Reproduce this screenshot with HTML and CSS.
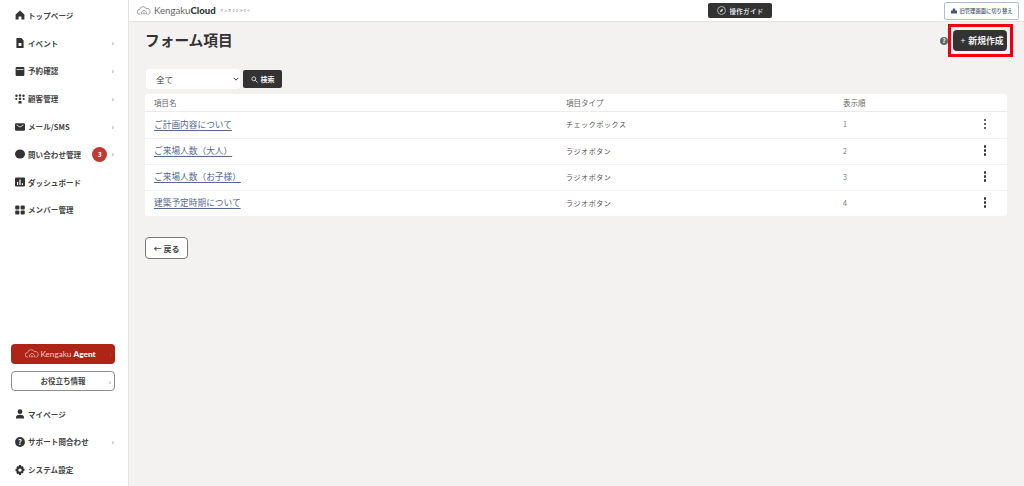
FILE: index.html
```html
<!DOCTYPE html>
<html lang="ja">
<head>
<meta charset="utf-8">
<title>フォーム項目</title>
<link rel="stylesheet" href="styles.css">
</head>
<body>
<div class="app">
  <aside class="sidebar">
    <nav class="nav">
      <a class="nav-item"><svg class="ico" viewBox="0 0 10 10"><path d="M5 .6 .6 4.6v5h3V6.400h2.800v3.200h3v-5z"/></svg><span>トップページ</span></a>
      <a class="nav-item"><svg class="ico" viewBox="0 0 10 10"><path fill-rule="evenodd" d="M1.400 0h5l2.200 2.400V10H1.400zM3.600 5v3h2.800V5z"/></svg><span>イベント</span><i class="chev">›</i></a>
      <a class="nav-item"><svg class="ico" viewBox="0 0 10 10"><path fill-rule="evenodd" d="M.6 2.200A1.200 1.200 0 0 1 1.800 1h6.400a1.200 1.200 0 0 1 1.200 1.200v6.600A1.200 1.200 0 0 1 8.200 10H1.800A1.200 1.200 0 0 1 .6 8.800zM1.500 3.300v.6h7v-.6z"/></svg><span>予約確認</span><i class="chev">›</i></a>
      <a class="nav-item"><svg class="ico" viewBox="0 0 10 10"><circle cx="1.500" cy="1.800" r="1.200"/><circle cx="5" cy="1.500" r="1.200"/><circle cx="8.500" cy="1.800" r="1.200"/><circle cx="1.300" cy="5" r="1.100"/><circle cx="8.700" cy="5" r="1.100"/><circle cx="5" cy="4.800" r="1.300"/><path d="M3.300 9.600 3.600 7h2.800l.3 2.600z"/></svg><span>顧客管理</span><i class="chev">›</i></a>
      <a class="nav-item"><svg class="ico" viewBox="0 0 10 10"><path fill-rule="evenodd" d="M1.200 1.200h7.600A1.200 1.200 0 0 1 10 2.400v5.200a1.200 1.200 0 0 1-1.200 1.200H1.200A1.200 1.200 0 0 1 0 7.600V2.400a1.200 1.200 0 0 1 1.200-1.200zM1.600 3.200 5 5.600l3.400-2.400v-.6L5 4.700 1.600 2.600z"/></svg><span>メール/SMS</span><i class="chev">›</i></a>
      <a class="nav-item"><svg class="ico" viewBox="0 0 10 10"><ellipse cx="5" cy="5" rx="5" ry="4.600"/></svg><span>問い合わせ管理</span><b class="badge">3</b><i class="chev chev-tight">›</i></a>
      <a class="nav-item"><svg class="ico" viewBox="0 0 10 10"><path fill-rule="evenodd" d="M1 .4h8a1 1 0 0 1 1 1v7.200a1 1 0 0 1-1 1H1a1 1 0 0 1-1-1V1.400a1 1 0 0 1 1-1zM2 5v3h1.200V5zm2.400-2.400V8h1.200V2.600zM6.800 6.200V8H8V6.200z"/></svg><span>ダッシュボード</span></a>
      <a class="nav-item"><svg class="ico" viewBox="0 0 10 10"><rect x=".2" y=".6" width="4.200" height="3.800" rx="1"/><rect x="5.600" y=".6" width="4.200" height="3.800" rx="1"/><rect x=".2" y="5.600" width="4.200" height="3.800" rx="1"/><rect x="5.600" y="5.600" width="4.200" height="3.800" rx="1"/></svg><span>メンバー管理</span></a>
    </nav>
    <div class="promo">
      <a class="promo-btn promo-red">
        <svg class="cloud cloud-promo" viewBox="0 0 16 10"><path d="M3.500 9.300H3A2.700 2.700 0 0 1 3 3.900 4 4 0 0 1 10.500 2.800 3.300 3.300 0 0 1 12.800 9.300H12M5 9.300V7l3-2.400L11 7v2.300M7 9.300V7.800h2v1.500" /></svg>
        <span class="promo-logo">Kengaku <b>Agent</b></span><i class="chev chev-promo">›</i>
      </a>
      <a class="promo-btn promo-white"><span>お役立ち情報</span><i class="chev chev-promo">›</i></a>
    </div>
    <nav class="nav nav-bottom">
      <a class="nav-item"><svg class="ico" viewBox="0 0 10 10"><circle cx="5" cy="2.700" r="2.400"/><path d="M1 9.600V8.300C1 6.500 3 5.800 5 5.800s4 .7 4 2.500v1.300z"/></svg><span>マイページ</span></a>
      <a class="nav-item"><svg class="ico" viewBox="0 0 10 10"><circle cx="5" cy="5" r="4.900"/><text class="q" x="5" y="7.800" text-anchor="middle">?</text></svg><span>サポート問合わせ</span><i class="chev">›</i></a>
      <a class="nav-item"><svg class="ico" viewBox="0 0 10 10"><path fill-rule="evenodd" d="M4 0h2l.3 1.400 1-.5 1.400 1.400-.6 1 1.400.4v2l-1.400.4.600 1-1.400 1.400-1-.6L6 10H4l-.3-1.400-1 .6L1.300 7.800l.6-1L.5 6.100v-2l1.400-.4-.6-1L2.700.9l1 .5zM5 3.400a1.700 1.700 0 1 0 0 3.400 1.700 1.700 0 0 0 0-3.400z"/></svg><span>システム設定</span></a>
    </nav>
  </aside>
  <div class="page">
    <header class="topbar">
      <div class="brand">
        <svg class="cloud" viewBox="0 0 16 10"><path d="M3.500 9.300H3A2.700 2.700 0 0 1 3 3.900 4 4 0 0 1 10.500 2.800 3.300 3.300 0 0 1 12.800 9.300H12M5 9.300V7l3-2.400L11 7v2.300M7 9.300V7.800h2v1.500"/></svg>
        <span class="brand-name">Kengaku<b>Cloud</b></span>
        <span class="brand-sub">ケンガククラウド</span>
      </div>
      <a class="guide"><svg class="guide-ico" viewBox="0 0 10 10"><circle cx="5" cy="5" r="4.400"/><path class="fill" d="M7 3 5.800 5.800 3 7l1.200-2.800z"/></svg><span>操作ガイド</span></a>
      <a class="switch"><svg class="switch-ico" viewBox="0 0 10 10"><path d="M3 1h4v3h3v5H0V4h3z"/></svg><span>旧管理画面に切り替え</span></a>
    </header>
    <main class="content">
      <div class="title-row">
        <h1>フォーム項目</h1>
        <div class="actions">
          <span class="help">?</span>
          <span class="highlight"><a class="btn-new"><span class="plus">+</span>新規作成</a></span>
        </div>
      </div>
      <form class="filter">
        <div class="select"><span>全て</span><svg class="caret" viewBox="0 0 8 5"><path d="M1 1l3 3 3-3"/></svg></div>
        <a class="btn-search"><svg class="search-ico" viewBox="0 0 10 10"><circle cx="4" cy="4" r="2.800"/><path d="M6 6l3.200 3.200"/></svg>検索</a>
      </form>
      <div class="table">
        <div class="row row-head"><span>項目名</span><span>項目タイプ</span><span>表示順</span><span></span></div>
        <div class="row"><a class="link">ご計画内容について</a><span>チェックボックス</span><span class="num">1</span><span class="more"><i></i><i></i><i></i></span></div>
        <div class="row"><a class="link">ご来場人数（大人）</a><span>ラジオボタン</span><span class="num">2</span><span class="more"><i></i><i></i><i></i></span></div>
        <div class="row"><a class="link">ご来場人数（お子様）</a><span>ラジオボタン</span><span class="num">3</span><span class="more"><i></i><i></i><i></i></span></div>
        <div class="row"><a class="link">建築予定時期について</a><span>ラジオボタン</span><span class="num">4</span><span class="more"><i></i><i></i><i></i></span></div>
      </div>
      <a class="btn-back">← 戻る</a>
    </main>
  </div>
</div>
</body>
</html>
```
FILE: styles.css
```css
* { box-sizing: border-box; }
html, body { margin: 0; height: 100%; }
body {
  font-family: "Noto Sans CJK JP", "Noto Sans", sans-serif;
  color: #333;
  background: #f3f2f0;
  overflow: hidden;
}
a { color: inherit; text-decoration: none; }
.app { display: flex; width: 1024px; height: 486px; }

.sidebar {
  width: 129px;
  flex: none;
  background: #fff;
  border-right: 1px solid #e4e3e1;
  display: flex;
  flex-direction: column;
  padding-top: 2px;
  padding-bottom: 2px;
}
.nav { display: flex; flex-direction: column; }
.nav-bottom { margin-top: 10px; }
.nav-item {
  height: 27.800px;
  display: flex;
  align-items: center;
  padding-left: 15px;
  padding-right: 14px;
  padding-bottom: 1px;
  font-size: 7.500px;
  font-weight: 700;
  color: #444;
  letter-spacing: .1px;
}
.ico { width: 10px; height: 10px; fill: #333; flex: none; margin-right: 3px; }
.q { font-size: 7.500px; font-weight: 700; fill: #fff; }
.chev { font-style: normal; font-weight: 400; font-size: 8px; color: #777; margin-left: auto; line-height: 1; }
.chev-tight { margin-left: 4px; }
.badge {
  width: 15px;
  height: 15px;
  margin-left: auto;
  border-radius: 50%;
  background: #bf3a36;
  color: #fff;
  font-size: 6px;
  display: flex;
  align-items: center;
  justify-content: center;
}
.promo {
  margin-top: auto;
  display: flex;
  flex-direction: column;
  gap: 7px;
  padding: 0 13px 0 11px;
}
.promo-btn {
  position: relative;
  height: 20px;
  border-radius: 4px;
  display: flex;
  align-items: center;
  justify-content: center;
  font-size: 7.500px;
  font-weight: 700;
}
.promo-red { background: #ae2416; color: #fff; padding-right: 5px; }
.promo-white { background: #fff; border: 1px solid #8c8c8c; color: #444; }
.promo-logo { font-family: Lato, sans-serif; font-weight: 400; font-size: 8.200px; color: #eec9c4; }
.promo-logo b { color: #fff; font-weight: 900; }
.chev-promo { position: absolute; right: 3px; top: 6px; }
.cloud { width: 14px; height: 9px; fill: none; stroke: #777; stroke-width: .8; flex: none; }
.cloud-promo { stroke: #eec9c4; margin-right: 1px; }

.page { flex: 1; display: flex; flex-direction: column; min-width: 0; }
.topbar {
  height: 21px;
  flex: none;
  background: #fff;
  box-shadow: 0 1px 1px rgba(0,0,0,.06);
  position: relative;
  display: flex;
  align-items: center;
  padding-left: 8px;
}
.brand { display: flex; align-items: center; }
.brand-name { font-family: Lato, sans-serif; font-size: 9.600px; color: #666; margin-left: 3px; }
.brand-name b { color: #333; font-weight: 900; }
.brand-sub { font-size: 3px; letter-spacing: .8px; color: #555; margin-left: 5px; }
.guide {
  position: absolute;
  left: 579px;
  top: 3px;
  width: 64px;
  height: 15px;
  border-radius: 2px;
  background: #333;
  color: #ddd;
  font-size: 6.500px;
  font-weight: 700;
  display: flex;
  align-items: center;
  justify-content: center;
  letter-spacing: .3px;
}
.guide-ico { width: 9px; height: 9px; fill: none; stroke: #ddd; stroke-width: .8; margin-right: 4px; }
.guide-ico .fill { fill: #ddd; stroke: none; }
.switch {
  position: absolute;
  left: 815px;
  top: 2px;
  width: 75px;
  height: 18px;
  border: 1px solid #a9c0d6;
  border-radius: 2px;
  background: #fff;
  font-size: 5.300px;
  font-weight: 500;
  color: #44586c;
  display: flex;
  align-items: center;
  justify-content: center;
  white-space: nowrap;
}
.switch-ico { width: 6px; height: 6px; fill: #44586c; margin-right: 3px; flex: none; }

.content { flex: 1; padding: 0 17px 0 16px; display: flex; flex-direction: column; align-items: flex-start; }
.title-row {
  width: 100%;
  height: 39px;
  display: flex;
  align-items: center;
  justify-content: space-between;
}
h1 { margin: 0; font-size: 14.700px; font-weight: 700; color: #333; line-height: 1; }
.actions { display: flex; align-items: center; margin-right: -6px; }
.help {
  width: 8px;
  height: 8px;
  border-radius: 50%;
  background: #666;
  color: #fff;
  font-size: 6px;
  font-weight: 700;
  line-height: 8px;
  text-align: center;
}
.highlight { display: block; padding: 3px 3px 3px 2px; border: 3px solid #ee0010; }
.btn-new {
  width: 54px;
  height: 21px;
  padding-left: 4px;
  border-radius: 4px;
  background: #333;
  color: #eee;
  font-size: 8.800px;
  font-weight: 700;
  display: flex;
  align-items: center;
  justify-content: center;
}
.plus { margin-right: 3px; font-weight: 400; }

.filter { display: flex; align-items: center; gap: 3px; margin: 9px 0 0 1px; height: 20px; }
.select {
  width: 94px;
  height: 20px;
  border-radius: 3px;
  background: #fff;
  display: flex;
  align-items: center;
  justify-content: space-between;
  padding: 0 1px 0 10px;
  font-size: 8.500px;
  color: #444;
}
.caret { width: 6px; height: 4px; fill: none; stroke: #333; stroke-width: 1.300; }
.btn-search {
  width: 39px;
  height: 18px;
  border-radius: 2px;
  background: #333;
  color: #eee;
  font-size: 7px;
  font-weight: 700;
  display: flex;
  align-items: center;
  justify-content: center;
}
.search-ico { width: 7px; height: 7px; fill: none; stroke: #eee; stroke-width: 1.200; margin-right: 3px; }

.table { width: 862px; margin-top: 5px; background: #fff; border-radius: 3px; }
.row {
  display: grid;
  grid-template-columns: 412px 277px 131px 22px;
  height: 26px;
  padding-left: 9px;
  padding-bottom: 2px;
  align-items: center;
  font-size: 7px;
  color: #555;
  letter-spacing: .6px;
  border-top: 1px solid #f4f3f2;
}
.row-head { height: 18px; padding-bottom: 0; border-top: 0; border-bottom: 1px solid #eceaea; font-size: 7.500px; letter-spacing: 0; color: #666; }
.row-head + .row { border-top: 0; }
.link { font-size: 8.700px; letter-spacing: 0; color: #55688f; text-decoration: underline; text-underline-offset: 2px; justify-self: start; }
.num { color: #777; }
.more { display: flex; flex-direction: column; align-items: center; gap: 1.500px; }
.more i { width: 2.500px; height: 2.500px; border-radius: 50%; background: #333; }

.btn-back {
  width: 43px;
  height: 22px;
  margin-top: 21px;
  border: 1px solid #777;
  border-radius: 4px;
  background: #fff;
  font-size: 8px;
  font-weight: 700;
  color: #444;
  display: flex;
  align-items: center;
  justify-content: center;
}
```
